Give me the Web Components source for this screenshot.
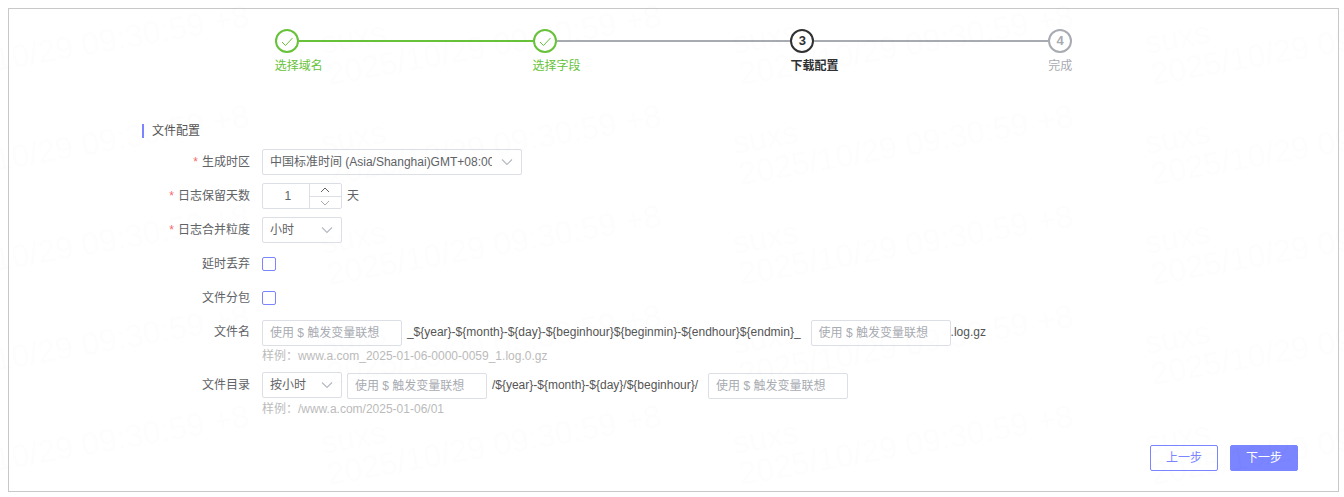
<!DOCTYPE html>
<html lang="zh-CN">
<head>
<meta charset="utf-8">
<title>下载配置</title>
<style>
body {
  margin: 8px 5px 5px 8px;
  background: #fff;
  color: #606266;
  font: 12px/26px "Liberation Sans", "Noto Sans CJK SC", sans-serif;
}
</style>
</head>
<body>
<download-config></download-config>
<water-mark></water-mark>

<template id="water-mark">
  <style>
    :host { display: block; position: fixed; inset: 0; pointer-events: none; opacity: 0.008; }
    svg { display: block; width: 100%; height: 100%; }
  </style>
  <svg aria-hidden="true">
    <defs>
      <pattern id="tile" x="320" y="-10" width="412" height="100" patternUnits="userSpaceOnUse">
        <g font-size="32" fill="#000">
          <text transform="translate(3 64) rotate(-10)">suxs</text>
          <text transform="translate(9 95) rotate(-10)">2025/10/29 09:30:59 +8</text>
        </g>
      </pattern>
    </defs>
    <rect width="100%" height="100%" fill="url(#tile)"/>
  </svg>
</template>

<template id="step-item">
  <style>
    :host { display: block; flex: 1; position: relative; color: #a8abb2; white-space: nowrap; }
    :host(:last-of-type) { flex: none; }
    .head { display: flex; align-items: center; }
    .mark {
      box-sizing: border-box; width: 24px; height: 24px; flex: none;
      display: flex; align-items: center; justify-content: center;
      border: 2px solid currentColor; border-radius: 50%;
      font-size: 13px; line-height: 20px; font-weight: bold;
    }
    .line { flex: 1; height: 2px; background: #a8abb2; }
    :host(:last-of-type) .line { display: none; }
    :host([state="done"]) { color: #67c23a; }
    :host([state="done"][solid]) .line { background: #67c23a; }
    :host([state="current"]) { color: #303133; font-weight: bold; }
    svg { display: none; }
    :host([state="done"]) svg { display: block; }
    :host([state="done"]) .num { display: none; }
  </style>
  <div class="head">
    <div class="mark">
      <span class="num"></span>
      <svg width="14" height="14" viewBox="0 0 14 14" fill="none" stroke="currentColor" stroke-width="1"><path d="M2 8l3.5 3.5L12.500 4"/></svg>
    </div>
    <div class="line"></div>
  </div>
  <div><slot></slot></div>
</template>

<template id="form-row">
  <style>
    :host { display: grid; grid-template-columns: 120px 1fr; }
    .label { text-align: right; padding-right: 12px; }
    :host([required]) .label::before { content: "*"; color: #f56c6c; margin-right: 4px; }
    .control { display: flex; gap: 5px; min-height: 26px; white-space: nowrap; }
    .hint { grid-column: 2; height: 18px; line-height: 20px; color: #bbb; }
    :host(:not([hint])) .hint { display: none; }
  </style>
  <div class="label"><slot name="label"></slot></div>
  <div class="control"><slot></slot></div>
  <div class="hint"></div>
</template>

<template id="select-box">
  <style>
    :host { display: block; position: relative; width: 80px; height: 26px; }
    :host([wide]) { width: 260px; }
    ::slotted(select) {
      appearance: none; box-sizing: border-box; width: 100%; height: 26px; margin: 0;
      padding: 0 29px 0 7px; border: 1px solid #dcdfe6; border-radius: 2px;
      background: #fff; color: #606266; font: inherit; line-height: 24px; display: block;
    }
    svg { position: absolute; right: 9px; top: 7px; pointer-events: none; }
  </style>
  <slot></slot>
  <svg width="12" height="12" viewBox="0 0 12 12" fill="none" stroke="#b4b8c0" stroke-width="1.100"><path d="M1 3.500l5 5 5-5"/></svg>
</template>

<template id="number-stepper">
  <style>
    :host { box-sizing: border-box; display: flex; width: 80px; height: 26px; border: 1px solid #dcdfe6; border-radius: 2px; }
    ::slotted(input) {
      box-sizing: border-box; flex: 1; min-width: 0; border: 0; margin: 0; padding: 0 0 0 4px;
      background: none; color: #606266; font: inherit; text-align: center;
    }
    .steps { display: grid; grid-template-rows: 1fr 1fr; width: 31px; border-left: 1px solid #dcdfe6; }
    button { border: 0; margin: 0; padding: 0; background: none; color: #606266; display: flex; align-items: center; justify-content: center; }
    button + button { border-top: 1px solid #dcdfe6; color: #a8abb2; }
  </style>
  <slot></slot>
  <div class="steps">
    <button type="button" aria-label="增加"><svg width="10" height="6" viewBox="0 0 10 6" fill="none" stroke="currentColor"><path d="M1 5l4-4 4 4"/></svg></button>
    <button type="button" aria-label="减少"><svg width="10" height="6" viewBox="0 0 10 6" fill="none" stroke="currentColor"><path d="M1 1l4 4 4-4"/></svg></button>
  </div>
</template>

<template id="download-config">
  <style>
    :host { display: block; box-sizing: border-box; border: 1px solid #c8c8c8; padding: 20px 0; }
    nav { display: flex; width: 60%; margin: 0 auto 45px; }
    form { margin: 0; }
    .fields { width: 80%; margin: 0 auto; display: grid; gap: 8px; }
    h2 { margin: 0 0 3px; border-left: 2px solid #7a85ff; padding-left: 8px; font-size: 12px; line-height: 14px; font-weight: normal; color: #555; }
    .var {
      box-sizing: border-box; width: 140px; height: 26px; margin: 1px 0 0; padding: 0 7px;
      border: 1px solid #dcdfe6; border-radius: 2px; background: #fff; color: #606266; font: inherit;
    }
    .var::placeholder { color: #a8abb2; opacity: 1; }
    .pattern { color: #555; }
    .pattern + .var { margin-left: 5px; }
    .suffix { color: #555; margin-left: -5px; }
    input[type="checkbox"] {
      appearance: none; box-sizing: border-box; width: 14px; height: 14px; margin: 6px 0;
      border: 1px solid #7a85ff; border-radius: 2px; background: #fff;
    }
    input[type="checkbox"]:checked { background: #7a85ff; }
    footer { display: flex; justify-content: flex-end; gap: 12px; margin: 28px 40px 0; }
    footer button {
      height: 26px; padding: 0 15px; border: 1px solid #7a85ff; border-radius: 2px;
      background: #fff; color: #7a85ff; font: inherit; line-height: 24px;
    }
    footer .primary { background: #7a85ff; color: #fff; }
  </style>
  <nav>
    <step-item state="done" num="1" solid>选择域名</step-item>
    <step-item state="done" num="2">选择字段</step-item>
    <step-item state="current" num="3">下载配置</step-item>
    <step-item num="4">完成</step-item>
  </nav>
  <form>
    <div class="fields">
      <h2>文件配置</h2>
      <form-row required>
        <label slot="label" for="zone">生成时区</label>
        <select-box wide><select id="zone"><option>中国标准时间 (Asia/Shanghai)GMT+08:00</option></select></select-box>
      </form-row>
      <form-row required>
        <label slot="label" for="days">日志保留天数</label>
        <number-stepper><input id="days" type="text" inputmode="numeric" value="1"></number-stepper>
        <span>天</span>
      </form-row>
      <form-row required>
        <label slot="label" for="merge">日志合并粒度</label>
        <select-box><select id="merge"><option>小时</option></select></select-box>
      </form-row>
      <form-row>
        <label slot="label" for="drop">延时丢弃</label>
        <input id="drop" type="checkbox">
      </form-row>
      <form-row>
        <label slot="label" for="split">文件分包</label>
        <input id="split" type="checkbox">
      </form-row>
      <form-row hint="样例：www.a.com_2025-01-06-0000-0059_1.log.0.gz">
        <label slot="label" for="name">文件名</label>
        <input class="var" id="name" type="text" placeholder="使用 $ 触发变量联想">
        <span class="pattern">_${year}-${month}-${day}-${beginhour}${beginmin}-${endhour}${endmin}_</span>
        <input class="var" type="text" aria-label="文件名后缀" placeholder="使用 $ 触发变量联想">
        <span class="suffix">.log.gz</span>
      </form-row>
      <form-row hint="样例：/www.a.com/2025-01-06/01">
        <label slot="label" for="dir">文件目录</label>
        <select-box><select id="dir"><option>按小时</option></select></select-box>
        <input class="var" type="text" aria-label="目录前缀" placeholder="使用 $ 触发变量联想">
        <span class="pattern">/${year}-${month}-${day}/${beginhour}/</span>
        <input class="var" type="text" aria-label="目录后缀" placeholder="使用 $ 触发变量联想">
      </form-row>
    </div>
    <footer>
      <button type="button">上一步</button>
      <button type="button" class="primary">下一步</button>
    </footer>
  </form>
</template>

<script>
class TemplateElement extends HTMLElement {
  constructor() {
    super();
    this.attachShadow({ mode: "open" })
      .append(document.getElementById(this.localName).content.cloneNode(true));
  }
}
customElements.define("step-item", class extends TemplateElement {
  connectedCallback() {
    if (this.getAttribute("state") !== "done")
      this.shadowRoot.querySelector(".num").textContent = this.getAttribute("num");
  }
});
customElements.define("form-row", class extends TemplateElement {
  connectedCallback() {
    this.shadowRoot.querySelector(".hint").textContent = this.getAttribute("hint") || "";
  }
});
customElements.define("select-box", class extends TemplateElement {});
customElements.define("number-stepper", class extends TemplateElement {
  connectedCallback() {
    const [up, down] = this.shadowRoot.querySelectorAll("button");
    const change = (by) => {
      const input = this.querySelector("input");
      input.value = Math.max(1, Number(input.value) + by);
    };
    up.addEventListener("click", () => change(1));
    down.addEventListener("click", () => change(-1));
  }
});
customElements.define("download-config", class extends TemplateElement {});
customElements.define("water-mark", class extends TemplateElement {});
</script>
</body>
</html>
